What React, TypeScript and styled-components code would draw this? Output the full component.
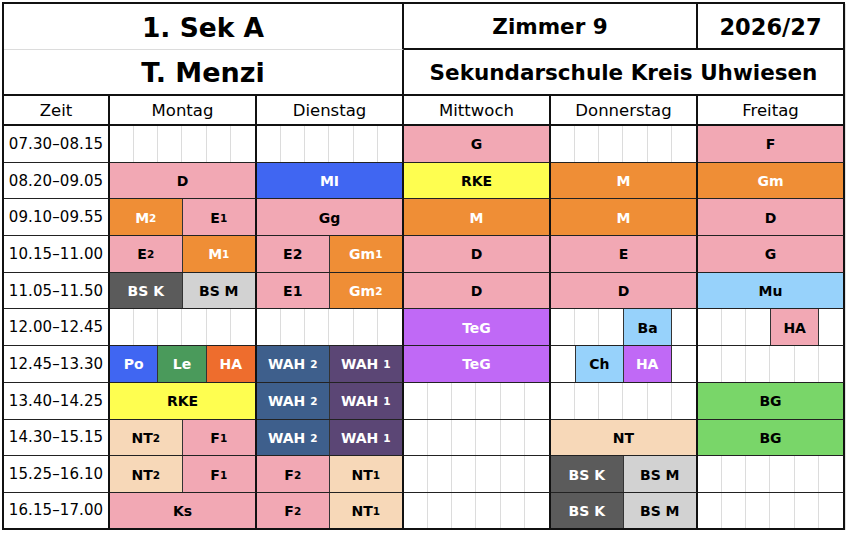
import React from "react";
import styled, { createGlobalStyle } from "styled-components";

const GlobalStyle = createGlobalStyle`
  html, body {
    margin: 0;
    padding: 0;
    background: #ffffff;
  }
  * {
    box-sizing: border-box;
  }
`;

type Swatch = { bg: string; fg: string };

const colors: Record<string, Swatch> = {
  pink: { bg: "#f2a8b4", fg: "#000" },
  blue: { bg: "#4066f2", fg: "#fff" },
  yellow: { bg: "#fefe50", fg: "#000" },
  orange: { bg: "#ef8e36", fg: "#fff" },
  dark: { bg: "#5b5b5b", fg: "#fff" },
  light: { bg: "#d2d2d2", fg: "#000" },
  purple: { bg: "#c069f6", fg: "#fff" },
  sky: { bg: "#97d2fb", fg: "#000" },
  green: { bg: "#4a9a5b", fg: "#fff" },
  red: { bg: "#ee6d2d", fg: "#fff" },
  steel: { bg: "#3e5f8c", fg: "#fff" },
  plum: { bg: "#5b4675", fg: "#fff" },
  peach: { bg: "#f7d8b8", fg: "#000" },
  lime: { bg: "#79d669", fg: "#000" },
};

// null = leerer Slot (1/6 Spalte)
type Lesson = { t: string; c: string; s: number } | null;

const L = (t: string, c: string, s = 6): Lesson => ({ t, c, s });
const E = (n: number): Lesson[] => Array.from({ length: n }, () => null);

const days = ["Montag", "Dienstag", "Mittwoch", "Donnerstag", "Freitag"];

const rows: { time: string; days: Lesson[][] }[] = [
  {
    time: "07.30–08.15",
    days: [E(6), E(6), [L("G", "pink")], E(6), [L("F", "pink")]],
  },
  {
    time: "08.20–09.05",
    days: [
      [L("D", "pink")],
      [L("MI", "blue")],
      [L("RKE", "yellow")],
      [L("M", "orange")],
      [L("Gm", "orange")],
    ],
  },
  {
    time: "09.10–09.55",
    days: [
      [L("M_2", "orange", 3), L("E_1", "pink", 3)],
      [L("Gg", "pink")],
      [L("M", "orange")],
      [L("M", "orange")],
      [L("D", "pink")],
    ],
  },
  {
    time: "10.15–11.00",
    days: [
      [L("E_2", "pink", 3), L("M_1", "orange", 3)],
      [L("E2", "pink", 3), L("Gm_1", "orange", 3)],
      [L("D", "pink")],
      [L("E", "pink")],
      [L("G", "pink")],
    ],
  },
  {
    time: "11.05–11.50",
    days: [
      [L("BS K", "dark", 3), L("BS M", "light", 3)],
      [L("E1", "pink", 3), L("Gm_2", "orange", 3)],
      [L("D", "pink")],
      [L("D", "pink")],
      [L("Mu", "sky")],
    ],
  },
  {
    time: "12.00–12.45",
    days: [
      E(6),
      E(6),
      [L("TeG", "purple")],
      [...E(3), L("Ba", "sky", 2), null],
      [...E(3), L("HA", "pink", 2), null],
    ],
  },
  {
    time: "12.45–13.30",
    days: [
      [L("Po", "blue", 2), L("Le", "green", 2), L("HA", "red", 2)],
      [L("WAH _2", "steel", 3), L("WAH _1", "plum", 3)],
      [L("TeG", "purple")],
      [null, L("Ch", "sky", 2), L("HA", "purple", 2), null],
      E(6),
    ],
  },
  {
    time: "13.40–14.25",
    days: [
      [L("RKE", "yellow")],
      [L("WAH _2", "steel", 3), L("WAH _1", "plum", 3)],
      E(6),
      E(6),
      [L("BG", "lime")],
    ],
  },
  {
    time: "14.30–15.15",
    days: [
      [L("NT_2", "peach", 3), L("F_1", "pink", 3)],
      [L("WAH _2", "steel", 3), L("WAH _1", "plum", 3)],
      E(6),
      [L("NT", "peach")],
      [L("BG", "lime")],
    ],
  },
  {
    time: "15.25–16.10",
    days: [
      [L("NT_2", "peach", 3), L("F_1", "pink", 3)],
      [L("F_2", "pink", 3), L("NT_1", "peach", 3)],
      E(6),
      [L("BS K", "dark", 3), L("BS M", "light", 3)],
      E(6),
    ],
  },
  {
    time: "16.15–17.00",
    days: [
      [L("Ks", "pink")],
      [L("F_2", "pink", 3), L("NT_1", "peach", 3)],
      E(6),
      [L("BS K", "dark", 3), L("BS M", "light", 3)],
      E(6),
    ],
  },
];

const Sheet = styled.div`
  margin: 2px 0 0 2px;
  width: 843px;
  display: grid;
  grid-template-columns: 106px repeat(5, 147px);
  grid-template-rows: 46px 46px 30px repeat(11, 36.7px);
  border-top: 2px solid #111;
  border-left: 2px solid #111;
  box-shadow: 1px 2px 0 #e2e2e2;
  font-family: "DejaVu Sans", Verdana, sans-serif;
  color: #000;
`;

const TitleCell = styled.div<{ $span: string; $under: string; $size: number }>`
  grid-column: ${({ $span }) => $span};
  display: flex;
  align-items: center;
  justify-content: center;
  border-right: 2px solid #111;
  border-bottom: ${({ $under }) => $under};
  font-weight: bold;
  font-size: ${({ $size }) => $size}px;
  padding-top: 1px;
`;

const DayHead = styled.div`
  display: flex;
  align-items: center;
  justify-content: center;
  border-right: 2px solid #111;
  border-bottom: 2px solid #111;
  font-size: 16.5px;
`;

const TimeCell = styled.div<{ $last: boolean }>`
  display: flex;
  align-items: center;
  justify-content: center;
  border-right: 2px solid #111;
  border-bottom: ${({ $last }) => ($last ? "2px solid #111" : "1px solid #222")};
  font-size: 15px;
  letter-spacing: 0.1px;
`;

const DayCell = styled.div<{ $last: boolean }>`
  display: grid;
  grid-template-columns: repeat(6, 1fr);
  border-right: 2px solid #111;
  border-bottom: ${({ $last }) => ($last ? "2px solid #111" : "1px solid #222")};
  min-width: 0;
`;

const Slot = styled.div<{ $edge: boolean }>`
  border-right: ${({ $edge }) => ($edge ? "none" : "1px solid #dcdcdc")};
`;

const Block = styled.div<{
  $span: number;
  $bg: string;
  $fg: string;
  $left: boolean;
  $right: boolean;
}>`
  grid-column: span ${({ $span }) => $span};
  display: flex;
  align-items: center;
  justify-content: center;
  background: ${({ $bg }) => $bg};
  color: ${({ $fg }) => $fg};
  border-left: ${({ $left }) => ($left ? "1px solid #333" : "none")};
  border-right: ${({ $right }) => ($right ? "1px solid #333" : "none")};
  font-weight: bold;
  font-size: 14px;
  white-space: pre;
  padding-top: 1px;
`;

const Sub = styled.span`
  font-size: 10.5px;
  vertical-align: baseline;
`;

const Label = ({ text }: { text: string }) => {
  const [main, sub] = text.split("_");
  return (
    <>
      {main}
      {sub && <Sub>{sub}</Sub>}
    </>
  );
};

const Day = ({ items, last }: { items: Lesson[]; last: boolean }) => (
  <DayCell $last={last}>
    {items.map((it, i) => {
      const isLast = i === items.length - 1;
      if (!it) return <Slot key={i} $edge={isLast || items[i + 1] !== null} />;
      const sw = colors[it.c];
      return (
        <Block
          key={i}
          $span={it.s}
          $bg={sw.bg}
          $fg={sw.fg}
          $left={i > 0 && items[i - 1] === null}
          $right={!isLast}
        >
          <Label text={it.t} />
        </Block>
      );
    })}
  </DayCell>
);

export default function App() {
  return (
    <>
      <GlobalStyle />
      <Sheet>
        <TitleCell $span="1 / 4" $under="1px solid #dcdcdc" $size={26.5}>
          1. Sek A
        </TitleCell>
        <TitleCell $span="4 / 6" $under="2px solid #111" $size={21.5}>
          Zimmer 9
        </TitleCell>
        <TitleCell $span="6 / 7" $under="2px solid #111" $size={22.5}>
          2026/27
        </TitleCell>
        <TitleCell $span="1 / 4" $under="2px solid #111" $size={27}>
          T. Menzi
        </TitleCell>
        <TitleCell $span="4 / 7" $under="2px solid #111" $size={21.5}>
          Sekundarschule Kreis Uhwiesen
        </TitleCell>

        <DayHead>Zeit</DayHead>
        {days.map((d) => (
          <DayHead key={d}>{d}</DayHead>
        ))}

        {rows.map((r, ri) => {
          const last = ri === rows.length - 1;
          return (
            <React.Fragment key={r.time}>
              <TimeCell $last={last}>{r.time}</TimeCell>
              {r.days.map((items, di) => (
                <Day key={di} items={items} last={last} />
              ))}
            </React.Fragment>
          );
        })}
      </Sheet>
    </>
  );
}
